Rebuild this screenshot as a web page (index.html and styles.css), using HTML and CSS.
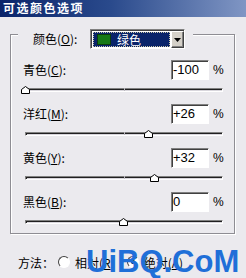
FILE: index.html
```html
<!DOCTYPE html>
<html lang="zh-CN">
<head>
    <meta charset="UTF-8">
    <meta name="viewport" content="width=device-width, initial-scale=1.0">
    <title>可选颜色选项</title>
    <link rel="stylesheet" href="styles.css">
</head>
<body>

<div class="dialog">
    <div class="titlebar">可选颜色选项</div>

    <div class="content">
        <fieldset class="group">
            <legend class="group-head">
                <span class="lbl">颜色(<u>O</u>):</span>
                <span class="combo">
                    <span class="combo-value"><span class="swatch"></span>绿色</span>
                    <span class="combo-btn">
                        <svg width="7" height="4" viewBox="0 0 7 4"><path d="M0 0h7L3.5 4z" fill="#000"/></svg>
                    </span>
                </span>
            </legend>

            <div class="channel">
                <div class="channel-row">
                    <span class="lbl">青色(<u>C</u>):</span>
                    <span class="num">-100</span>
                    <span class="pct">%</span>
                </div>
                <div class="slider">
                    <div class="track">
                        <span class="tick"></span>
                        <span class="thumb" style="left: 0%"><svg width="9" height="8" viewBox="0 0 9 8"><path d="M0.5 3.5L4.5 0.5L8.5 3.5V7.5H0.5Z" fill="#fff" stroke="#000"/></svg></span>
                    </div>
                </div>
            </div>

            <div class="channel">
                <div class="channel-row">
                    <span class="lbl">洋红(<u>M</u>):</span>
                    <span class="num">+26</span>
                    <span class="pct">%</span>
                </div>
                <div class="slider">
                    <div class="track">
                        <span class="tick"></span>
                        <span class="thumb" style="left: 63%"><svg width="9" height="8" viewBox="0 0 9 8"><path d="M0.5 3.5L4.5 0.5L8.5 3.5V7.5H0.5Z" fill="#fff" stroke="#000"/></svg></span>
                    </div>
                </div>
            </div>

            <div class="channel">
                <div class="channel-row">
                    <span class="lbl">黄色(<u>Y</u>):</span>
                    <span class="num">+32</span>
                    <span class="pct">%</span>
                </div>
                <div class="slider">
                    <div class="track">
                        <span class="tick"></span>
                        <span class="thumb" style="left: 66%"><svg width="9" height="8" viewBox="0 0 9 8"><path d="M0.5 3.5L4.5 0.5L8.5 3.5V7.5H0.5Z" fill="#fff" stroke="#000"/></svg></span>
                    </div>
                </div>
            </div>

            <div class="channel">
                <div class="channel-row">
                    <span class="lbl">黑色(<u>B</u>):</span>
                    <span class="num">0</span>
                    <span class="pct">%</span>
                </div>
                <div class="slider">
                    <div class="track">
                        <span class="tick"></span>
                        <span class="thumb" style="left: 50%"><svg width="9" height="8" viewBox="0 0 9 8"><path d="M0.5 3.5L4.5 0.5L8.5 3.5V7.5H0.5Z" fill="#fff" stroke="#000"/></svg></span>
                    </div>
                </div>
            </div>
        </fieldset>

        <div class="method">
            <span class="lbl">方法：</span>
            <span class="radio"><span class="dot"></span>相对(<u>R</u>)</span>
            <span class="radio on"><span class="dot"></span>绝对(<u>A</u>)</span>
        </div>
    </div>

    <div class="watermark">UiBQ.CoM</div>
</div>

</body>
</html>
```

FILE: styles.css
```css
/* 可选颜色 dialog */
body {
    margin: 0;
    background: #ebeaee;
    font-family: "Noto Sans CJK SC", sans-serif;
    font-size: 12px;
    color: #000;
}

.dialog {
    position: relative;
    width: 246px;
    height: 278px;
    overflow: hidden;
}

.titlebar {
    height: 17px;
    padding-left: 3px;
    background: linear-gradient(to right, #0a246a, #2a4a8c 45%, #8096c4);
    color: #fff;
    font-weight: bold;
    font-size: 12px;
    line-height: 16px;
    letter-spacing: 1.5px;
}

.content {
    padding: 2px 11px 0 10px;
}

u {
    text-decoration: underline;
    text-underline-offset: 1px;
}

/* group box */
.group {
    margin: 0;
    padding: 11px 0 0 0;
    min-width: 0;
    border: 1px solid #8e8d93;
    box-shadow: inset 1px 1px 0 #fff, 1px 1px 0 #fff;
}

.group-head {
    display: flex;
    align-items: center;
    margin-left: 7px;
    padding: 10px 8px 0 15px;
    background: #ebeaee;
}

.group-head .lbl {
    width: 57px;
    line-height: 20px;
}

.combo {
    display: flex;
    width: 95px;
    height: 20px;
    box-sizing: border-box;
    border: 1px solid;
    border-color: #808080 #fff #fff #808080;
    box-shadow: inset 1px 1px 0 #404040;
    padding: 1px 0 0 1px;
    background: #fff;
}

.combo-value {
    flex: 1;
    display: flex;
    align-items: center;
    margin: 1px;
    background: #0a246a;
    outline: 1px dotted #c9c6a6;
    outline-offset: -1px;
    color: #fff;
    line-height: 14px;
}

.swatch {
    width: 12px;
    height: 9px;
    margin: 0 6px 0 4px;
    background: #167a16;
    border: 1px solid #0c3d0c;
}

.combo-btn {
    display: flex;
    align-items: center;
    justify-content: center;
    width: 13px;
    box-sizing: border-box;
    background: #d4d0c8;
    border: 1px solid;
    border-color: #fff #404040 #404040 #fff;
    box-shadow: inset -1px -1px 0 #808080;
}

/* channel rows */
.channel {
    padding: 0 9px 0 12px;
}

.channel-row {
    display: flex;
    align-items: center;
    height: 20px;
}

.channel-row .lbl {
    flex: 1;
    line-height: 20px;
}

.num {
    width: 38px;
    height: 20px;
    box-sizing: border-box;
    padding-left: 1px;
    background: #fff;
    border: 1px solid;
    border-color: #808080 #fff #fff #808080;
    box-shadow: inset 1px 1px 0 #404040;
    font-family: "Liberation Sans", Arial, sans-serif;
    font-size: 13px;
    line-height: 18px;
}

.pct {
    width: 12px;
    margin-left: 4px;
    font-family: "Liberation Sans", Arial, sans-serif;
    font-size: 12px;
}

.slider {
    padding: 8px 2px 12px 2px;
}

.channel:last-child .slider {
    padding-bottom: 9px;
}

.track {
    position: relative;
    height: 4px;
    box-sizing: border-box;
    border: 1px solid;
    border-color: #808080 #fff #fff #808080;
    box-shadow: inset 1px 1px 0 #202020;
    background: #d8d6dc;
}

.tick {
    position: absolute;
    left: 50%;
    top: -1px;
    width: 1px;
    height: 3px;
    background: #b8b6bc;
}

.thumb {
    position: absolute;
    top: -3px;
    margin-left: -5px;
    width: 9px;
    height: 8px;
}

.thumb svg {
    display: block;
}

/* bottom */
.method {
    display: flex;
    align-items: center;
    height: 20px;
    margin-top: 18px;
    padding-left: 8px;
}

.method .lbl {
    width: 40px;
}

.radio {
    display: flex;
    align-items: center;
    margin-right: 12px;
}

.radio .dot {
    position: relative;
    width: 12px;
    height: 12px;
    box-sizing: border-box;
    margin-right: 5px;
    border-radius: 50%;
    border: 1px solid;
    border-color: #404040 #fff #fff #404040;
    background: #fff;
}

.radio.on .dot::after {
    content: "";
    position: absolute;
    left: 3px;
    top: 3px;
    width: 4px;
    height: 4px;
    border-radius: 50%;
    background: #000;
}

.watermark {
    position: absolute;
    left: 86px;
    top: 246px;
    font-family: "Liberation Sans", Arial, sans-serif;
    font-weight: bold;
    font-size: 31px;
    line-height: 32px;
    color: #1f6fd8;
    white-space: nowrap;
}
```
